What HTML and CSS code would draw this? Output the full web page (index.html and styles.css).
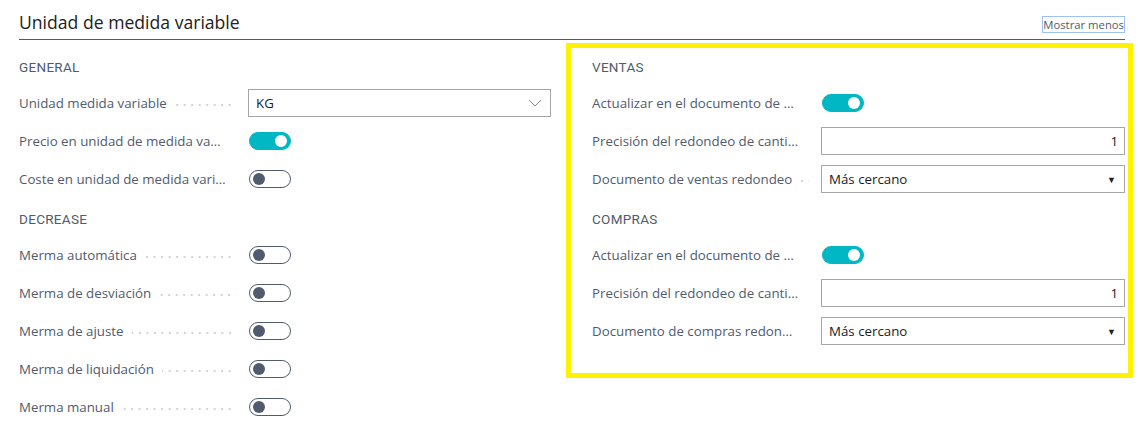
FILE: index.html
```html
<!DOCTYPE html>
<html lang="es">
<head>
    <meta charset="UTF-8">
    <title>Unidad de medida variable</title>
    <link rel="stylesheet" href="styles.css">
</head>
<body>
    <div class="page">
        <div class="header">
            <h1 class="title">Unidad de medida variable</h1>
            <a class="toggle-link" href="#">Mostrar menos</a>
        </div>

        <div class="columns">
            <div class="col">
                <h2 class="group">General</h2>
                <div class="row">
                    <div class="label"><span class="text">Unidad medida variable</span><span class="leader"></span></div>
                    <div class="input lookup">KG
                        <svg class="chev" width="14" height="8" viewBox="0 0 14 8"><path d="M1 1l6 6 6-6" fill="none" stroke="#8a8a8a" stroke-width="1"/></svg>
                    </div>
                </div>
                <div class="row">
                    <div class="label"><span class="text">Precio en unidad de medida variable</span><span class="leader"></span></div>
                    <span class="switch on"></span>
                </div>
                <div class="row">
                    <div class="label"><span class="text">Coste en unidad de medida variable</span><span class="leader"></span></div>
                    <span class="switch"></span>
                </div>

                <h2 class="group second">Decrease</h2>
                <div class="row">
                    <div class="label"><span class="text">Merma automática</span><span class="leader"></span></div>
                    <span class="switch"></span>
                </div>
                <div class="row">
                    <div class="label"><span class="text">Merma de desviación</span><span class="leader"></span></div>
                    <span class="switch"></span>
                </div>
                <div class="row">
                    <div class="label"><span class="text">Merma de ajuste</span><span class="leader"></span></div>
                    <span class="switch"></span>
                </div>
                <div class="row">
                    <div class="label"><span class="text">Merma de liquidación</span><span class="leader"></span></div>
                    <span class="switch"></span>
                </div>
                <div class="row">
                    <div class="label"><span class="text">Merma manual</span><span class="leader"></span></div>
                    <span class="switch"></span>
                </div>
            </div>

            <div class="col highlight">
                <h2 class="group">Ventas</h2>
                <div class="row">
                    <div class="label"><span class="text">Actualizar en el documento de ventas</span><span class="leader"></span></div>
                    <span class="switch on"></span>
                </div>
                <div class="row">
                    <div class="label"><span class="text">Precisión del redondeo de cantidad</span><span class="leader"></span></div>
                    <div class="input number">1</div>
                </div>
                <div class="row">
                    <div class="label"><span class="text">Documento de ventas redondeo</span><span class="leader"></span></div>
                    <div class="input select">Más cercano<span class="caret">&#9660;</span></div>
                </div>

                <h2 class="group second">Compras</h2>
                <div class="row">
                    <div class="label"><span class="text">Actualizar en el documento de compras</span><span class="leader"></span></div>
                    <span class="switch on"></span>
                </div>
                <div class="row">
                    <div class="label"><span class="text">Precisión del redondeo de cantidad</span><span class="leader"></span></div>
                    <div class="input number">1</div>
                </div>
                <div class="row">
                    <div class="label"><span class="text">Documento de compras redondeo</span><span class="leader"></span></div>
                    <div class="input select">Más cercano<span class="caret">&#9660;</span></div>
                </div>
            </div>
        </div>
    </div>
</body>
</html>
```

FILE: styles.css
```css
body {
    margin: 0;
    background: #fff;
    font-family: "Open Sans", "Noto Sans", sans-serif;
    color: #212121;
}
.page {
    padding: 0 5px 0 19px;
}
.header {
    display: flex;
    justify-content: space-between;
    align-items: flex-end;
    margin-right: 8px;
    padding: 10px 0 5px;
    border-bottom: 1px solid #505c6d;
}
.title {
    margin: 0;
    font-size: 17.6px;
    font-weight: normal;
    line-height: 24px;
}
.toggle-link {
    font-size: 11.3px;
    line-height: 15px;
    color: #505c6d;
    text-decoration: none;
    border: 1px solid #9fc0f5;
    padding: 0;
    margin-bottom: 1px;
}
.columns {
    display: grid;
    grid-template-columns: 532px 1fr;
    column-gap: 15px;
    align-items: start;
}
.col {
    padding-top: 17px;
}
.col.highlight {
    margin-top: 3px;
    border: 5px solid #fff200;
    padding: 9px 3px 23px 21px;
}
.group {
    margin: 0 0 7px;
    height: 20px;
    line-height: 20px;
    font-family: Roboto, "Noto Sans", sans-serif;
    font-size: 13.5px;
    font-weight: 400;
    color: #505c6d;
    text-transform: uppercase;
    letter-spacing: 0.3px;
}
.group.second {
    margin-top: 11px;
}
.row {
    display: flex;
    align-items: center;
    height: 38px;
}
.label {
    display: flex;
    align-items: center;
    width: 229px;
    flex: none;
    font-size: 13.3px;
    color: #505c6d;
}
.text {
    white-space: nowrap;
    overflow: hidden;
    text-overflow: ellipsis;
    flex: 0 1 auto;
}
.leader {
    flex: 1 0 2px;
    height: 2px;
    margin: 4px 12px 0 8px;
    background-image: linear-gradient(to right, #d2d2d2 1.5px, transparent 1.5px);
    background-size: 7.5px 1.5px;
    background-position: right center;
    background-repeat: repeat-x;
}
.input {
    flex: 1;
    display: flex;
    align-items: center;
    height: 26px;
    border: 1px solid #a6a6a6;
    padding: 0 7px;
    font-size: 13.3px;
    color: #212121;
    background: #fff;
}
.input.number {
    justify-content: flex-end;
    padding-right: 6px;
}
.lookup {
    justify-content: space-between;
}
.chev {
    margin-right: 1px;
}
.select {
    justify-content: space-between;
}
.caret {
    font-size: 9px;
    color: #212121;
    margin-right: 1px;
}
.switch {
    position: relative;
    display: inline-block;
    width: 40px;
    height: 16px;
    margin-left: 1px;
    border: 1px solid #505c6d;
    border-radius: 9px;
    background: #fff;
}
.switch::after {
    content: "";
    position: absolute;
    top: 2px;
    left: 3px;
    width: 12px;
    height: 12px;
    border-radius: 50%;
    background: #505c6d;
}
.switch.on {
    border-color: #00b7c3;
    background: #00b7c3;
}
.switch.on::after {
    left: auto;
    right: 3px;
    background: #fff;
}
```
